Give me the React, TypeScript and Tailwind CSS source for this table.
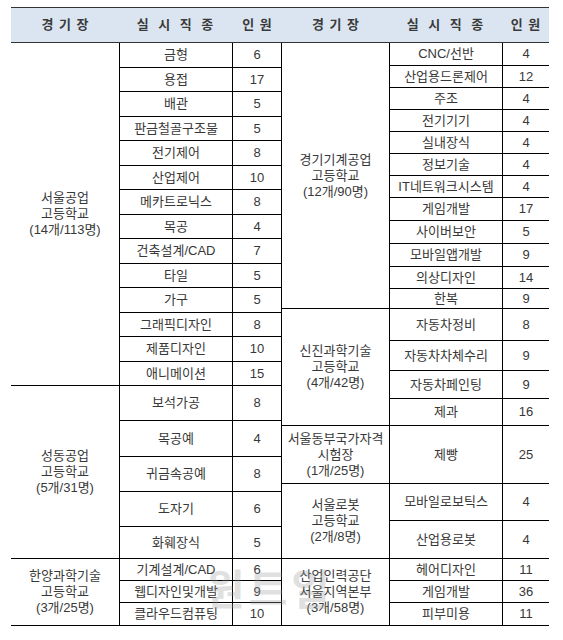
import React from "react";

type Row = [string, number, string];
type Section = { label: string[]; rows: Row[] };

const leftSections: Section[] = [
  {
    label: ["서울공업", "고등학교", "(14개/113명)"],
    rows: [
      ["금형", 6, "h-[24.5px]"],
      ["용접", 17, "h-[24.5px]"],
      ["배관", 5, "h-[24.5px]"],
      ["판금철골구조물", 5, "h-[24.5px]"],
      ["전기제어", 8, "h-[24.5px]"],
      ["산업제어", 10, "h-[24.5px]"],
      ["메카트로닉스", 8, "h-[24.5px]"],
      ["목공", 4, "h-[24.5px]"],
      ["건축설계/CAD", 7, "h-[24.5px]"],
      ["타일", 5, "h-[24.5px]"],
      ["가구", 5, "h-[24.5px]"],
      ["그래픽디자인", 8, "h-[24.5px]"],
      ["제품디자인", 10, "h-[24.5px]"],
      ["애니메이션", 15, "h-[24.5px]"],
    ],
  },
  {
    label: ["성동공업", "고등학교", "(5개/31명)"],
    rows: [
      ["보석가공", 8, "h-[35px]"],
      ["목공예", 4, "h-[36px]"],
      ["귀금속공예", 8, "h-[35px]"],
      ["도자기", 6, "h-[35px]"],
      ["화훼장식", 5, "h-[32px]"],
    ],
  },
  {
    label: ["한양과학기술", "고등학교", "(3개/25명)"],
    rows: [
      ["기계설계/CAD", 6, "h-[22px]"],
      ["웹디자인및개발", 9, "h-[22px]"],
      ["클라우드컴퓨팅", 10, "h-[23px]"],
    ],
  },
];

const rightSections: Section[] = [
  {
    label: ["경기기계공업", "고등학교", "(12개/90명)"],
    rows: [
      ["CNC/선반", 4, "h-[23px]"],
      ["산업용드론제어", 12, "h-[22px]"],
      ["주조", 4, "h-[22px]"],
      ["전기기기", 4, "h-[22px]"],
      ["실내장식", 4, "h-[22px]"],
      ["정보기술", 4, "h-[22px]"],
      ["IT네트워크시스템", 4, "h-[22px]"],
      ["게임개발", 17, "h-[23px]"],
      ["사이버보안", 5, "h-[23px]"],
      ["모바일앱개발", 9, "h-[23px]"],
      ["의상디자인", 14, "h-[22px]"],
      ["한복", 9, "h-[20px]"],
    ],
  },
  {
    label: ["신진과학기술", "고등학교", "(4개/42명)"],
    rows: [
      ["자동차정비", 8, "h-[32px]"],
      ["자동차차체수리", 9, "h-[30px]"],
      ["자동차페인팅", 9, "h-[28px]"],
      ["제과", 16, "h-[27px]"],
    ],
  },
  {
    label: ["서울동부국가자격", "시험장", "(1개/25명)"],
    rows: [["제빵", 25, "h-[58px]"]],
  },
  {
    label: ["서울로봇", "고등학교", "(2개/8명)"],
    rows: [
      ["모바일로보틱스", 4, "h-[37px]"],
      ["산업용로봇", 4, "h-[38px]"],
    ],
  },
  {
    label: ["산업인력공단", "서울지역본부", "(3개/58명)"],
    rows: [
      ["헤어디자인", 11, "h-[22px]"],
      ["게임개발", 36, "h-[22px]"],
      ["피부미용", 11, "h-[23px]"],
    ],
  },
];

function SectionBlock({ s, side }: { s: Section; side: "left" | "right" }) {
  const labelW = side === "left" ? "w-[109px]" : "w-[108px]";
  const numW = side === "left" ? "w-[49px] border-r" : "w-[46px]";
  return (
    <div className="flex">
      <div
        className={`${labelW} shrink-0 flex flex-col items-center justify-center border-r border-b border-black text-[13px] leading-[16px] text-[#383838] whitespace-nowrap`}
      >
        {s.label.map((l) => (
          <div key={l}>{l}</div>
        ))}
      </div>
      <div className="flex flex-col">
        {s.rows.map(([job, n, h]) => (
          <div key={job} className={`flex ${h}`}>
            <div className="w-[113px] shrink-0 flex items-center justify-center border-r border-b border-black text-[13px] text-[#383838] whitespace-nowrap">
              {job}
            </div>
            <div
              className={`${numW} shrink-0 flex items-center justify-center border-b border-black text-[13px] text-[#383838]`}
            >
              {n}
            </div>
          </div>
        ))}
      </div>
    </div>
  );
}

export default function App() {
  const headers = [
    ["경 기 장", "w-[109px] tracking-[1px]"],
    ["실 시 직 종", "w-[113px] tracking-[3px]"],
    ["인 원", "w-[49px] tracking-[1px]"],
    ["경 기 장", "w-[108px] tracking-[1px]"],
    ["실 시 직 종", "w-[113px] tracking-[3px]"],
    ["인 원", "w-[46px] tracking-[1px]"],
  ];
  return (
    <div className="w-[563px] h-[640px] bg-white pt-[7px] pl-[11px] font-['Liberation_Sans','Noto_Sans_CJK_KR',sans-serif]">
      <div className="relative w-[538px]">
        <div className="flex h-[36px] bg-[#dbe5f1] border-t border-b border-[#333]">
          {headers.map(([t, w], i) => (
            <div
              key={i}
              className={`${w} shrink-0 flex items-center justify-center font-bold text-[13px] text-[#3a3a3a] whitespace-pre`}
            >
              {t}
            </div>
          ))}
        </div>
        <div className="flex">
          <div className="flex flex-col w-[271px]">
            {leftSections.map((s, i) => (
              <SectionBlock key={i} s={s} side="left" />
            ))}
          </div>
          <div className="flex flex-col w-[267px]">
            {rightSections.map((s, i) => (
              <SectionBlock key={i} s={s} side="right" />
            ))}
          </div>
        </div>
        <div className="absolute left-[195px] top-[552px] text-[42px] font-bold tracking-[4px] text-[#9a9a9a] opacity-30 pointer-events-none whitespace-nowrap">
          원트일
        </div>
      </div>
    </div>
  );
}
